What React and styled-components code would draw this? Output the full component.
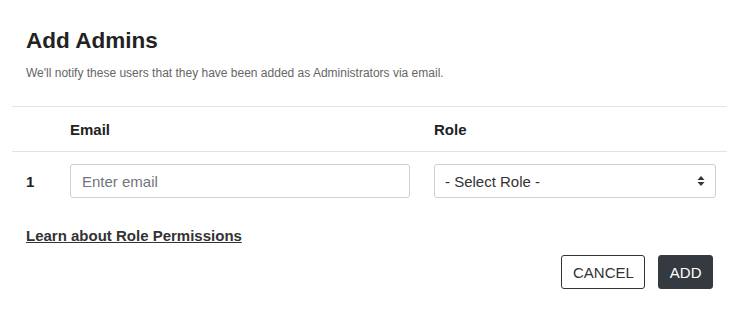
import React from "react";
import styled, { createGlobalStyle } from "styled-components";

const Global = createGlobalStyle`
  html, body { margin: 0; padding: 0; background: #fff; }
  body { font-family: "Liberation Sans", Arial, sans-serif; color: #222; }
  * { box-sizing: border-box; }
`;

const Modal = styled.div`
  width: 735px;
  padding: 0 8px 0 12px;
`;

const Header = styled.div`
  padding: 28px 14px 26px;
`;

const Title = styled.h2`
  margin: 0;
  font-size: 22.5px;
  line-height: 26px;
  font-weight: 700;
  color: #222;
`;

const Subtitle = styled.p`
  margin: 12px 0 0;
  font-size: 12px;
  line-height: 14px;
  color: #666;
`;

const Table = styled.div`
  border-top: 1px solid #e3e3e6;
`;

const Row = styled.div`
  display: grid;
  grid-template-columns: 58px 364px 1fr;
  align-items: center;
  border-bottom: ${(p) => (p.$head ? "1px solid #e3e3e6" : "none")};
  height: ${(p) => (p.$head ? "45px" : "auto")};
  padding: ${(p) => (p.$head ? "0" : "12px 0 0")};
`;

const HeadCell = styled.div`
  font-size: 15px;
  font-weight: 700;
  color: #222;
`;

const Index = styled.div`
  padding-left: 14px;
  font-size: 15px;
  font-weight: 700;
  color: #222;
`;

const Input = styled.input`
  width: 340px;
  height: 34px;
  border: 1px solid #ccd0d5;
  border-radius: 3px;
  padding: 0 11px;
  font-family: "Liberation Sans", Arial, sans-serif;
  font-size: 15px;
  color: #333;
  outline: none;
  &::placeholder { color: #6f757c; }
`;

const SelectBox = styled.div`
  width: 282px;
  height: 34px;
  border: 1px solid #ccd0d5;
  border-radius: 3px;
  padding: 0 10px 0 10px;
  display: flex;
  align-items: center;
  justify-content: space-between;
  font-size: 15px;
  color: #333;
`;

const Footer = styled.div`
  display: flex;
  flex-direction: column;
  padding: 29px 14px 0;
`;

const Link = styled.a`
  align-self: flex-start;
  font-size: 15px;
  font-weight: 700;
  color: #333;
  text-decoration: underline;
  line-height: 17px;
`;

const Actions = styled.div`
  display: flex;
  justify-content: flex-end;
  gap: 13px;
  margin-top: 11px;
`;

const Button = styled.button`
  height: 34px;
  padding: 0 10.5px;
  border-radius: 3px;
  font-family: "Liberation Sans", Arial, sans-serif;
  font-size: 15px;
  border: 1px solid ${(p) => (p.$primary ? "#343a40" : "#333")};
  background: ${(p) => (p.$primary ? "#343a40" : "#fff")};
  color: ${(p) => (p.$primary ? "#fff" : "#333")};
  cursor: pointer;
`;

const Arrows = () => (
  <svg width="8" height="12" viewBox="0 0 8 12">
    <path d="M4 1 L7.5 5 L0.5 5 Z" fill="#333" />
    <path d="M4 11 L7.5 7 L0.5 7 Z" fill="#333" />
  </svg>
);

export default function App() {
  return (
    <>
      <Global />
      <Modal>
        <Header>
          <Title>Add Admins</Title>
          <Subtitle>
            We'll notify these users that they have been added as Administrators via email.
          </Subtitle>
        </Header>
        <Table>
          <Row $head>
            <div />
            <HeadCell>Email</HeadCell>
            <HeadCell>Role</HeadCell>
          </Row>
          <Row>
            <Index>1</Index>
            <Input placeholder="Enter email" />
            <SelectBox>
              <span>- Select Role -</span>
              <Arrows />
            </SelectBox>
          </Row>
        </Table>
        <Footer>
          <Link href="#">Learn about Role Permissions</Link>
          <Actions>
            <Button>CANCEL</Button>
            <Button $primary>ADD</Button>
          </Actions>
        </Footer>
      </Modal>
    </>
  );
}
